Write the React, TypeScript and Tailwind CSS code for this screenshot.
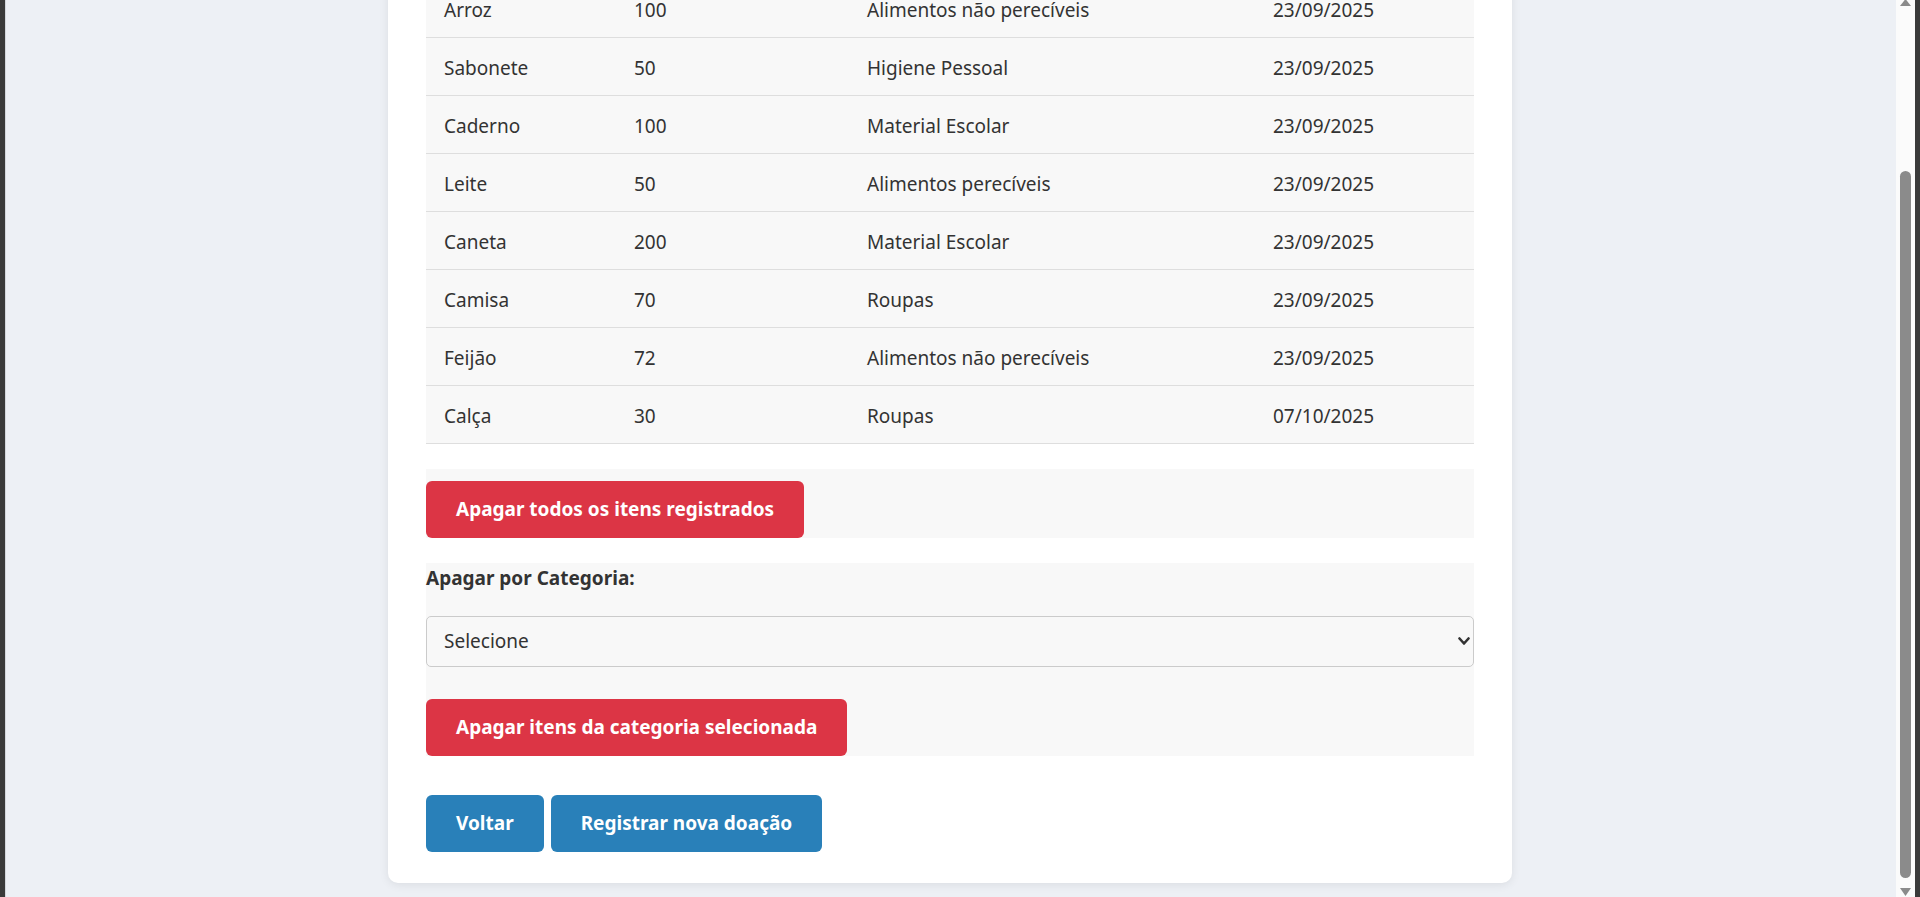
const items = [
    { nome: "Arroz", qtd: 100, categoria: "Alimentos não perecíveis", data: "23/09/2025" },
    { nome: "Sabonete", qtd: 50, categoria: "Higiene Pessoal", data: "23/09/2025" },
    { nome: "Caderno", qtd: 100, categoria: "Material Escolar", data: "23/09/2025" },
    { nome: "Leite", qtd: 50, categoria: "Alimentos perecíveis", data: "23/09/2025" },
    { nome: "Caneta", qtd: 200, categoria: "Material Escolar", data: "23/09/2025" },
    { nome: "Camisa", qtd: 70, categoria: "Roupas", data: "23/09/2025" },
    { nome: "Feijão", qtd: 72, categoria: "Alimentos não perecíveis", data: "23/09/2025" },
    { nome: "Calça", qtd: 30, categoria: "Roupas", data: "07/10/2025" },
];

function Scrollbar() {
    return (
        <div className="w-[19px] bg-[#fbfbfb] flex flex-col items-center">
            <svg width="19" height="6" viewBox="0 0 19 6">
                <polygon points="4,6 15,6 9.5,-1" fill="#8b8b8b" />
            </svg>
            <div className="mt-[165px] h-[707px] w-[11px] rounded-full bg-[#8b8b8b]" />
            <svg className="mt-[10px]" width="19" height="9" viewBox="0 0 19 9">
                <polygon points="4,0 15,0 9.5,8" fill="#8b8b8b" />
            </svg>
        </div>
    );
}

export default function App() {
    return (
        <div className="flex h-[897px] w-full overflow-hidden bg-[#edf0f5] text-[#333] font-['Noto_Sans',sans-serif]">
            <div className="w-[5px] bg-[#3a3a3a]" />

            <main className="flex-1 flex justify-center pr-[2px] border-l border-[#d4d7dc]">
                <div className="w-[1124px] self-start -mt-[21px] bg-white rounded-[10px] shadow-[0_2px_10px_rgba(0,0,0,0.08)] px-[38px] pb-[31px]">

                    <table className="w-full text-[19px] border-collapse">
                        <tbody>
                            {items.map((item) => (
                                <tr key={item.nome} className="h-[58px] bg-[#f8f8f8] border-b border-[#dedede]">
                                    <td className="w-[190px] px-[18px] pt-[5px]">{item.nome}</td>
                                    <td className="w-[233px] px-[18px] pt-[5px]">{item.qtd}</td>
                                    <td className="w-[406px] px-[18px] pt-[5px]">{item.categoria}</td>
                                    <td className="px-[18px] pt-[5px]">{item.data}</td>
                                </tr>
                            ))}
                        </tbody>
                    </table>

                    <div className="mt-[25px] pt-[12px] bg-[#f8f8f8]">
                        <button className="h-[57px] px-[30px] rounded-[6px] bg-[#dc3545] text-white text-[19px] font-bold">
                            Apagar todos os itens registrados
                        </button>
                    </div>

                    <div className="mt-[25px] bg-[#f8f8f8]">
                        <label className="block h-[30px] leading-[30px] text-[19px] font-bold">
                            Apagar por Categoria:
                        </label>
                        <div className="relative mt-[23px]">
                            <select className="appearance-none w-full h-[51px] pl-[17px] rounded-[5px] border border-[#cbcbcb] bg-[#f8f8f8] text-[19px] outline-none">
                                <option>Selecione</option>
                            </select>
                            <svg className="absolute right-[4px] top-[21px] pointer-events-none" width="12" height="9" viewBox="0 0 12 9">
                                <polyline points="1.5,1.5 6,6.5 10.5,1.5" fill="none" stroke="#333" strokeWidth="2.6" strokeLinecap="round" strokeLinejoin="round" />
                            </svg>
                        </div>
                        <button className="mt-[32px] h-[57px] px-[30px] rounded-[6px] bg-[#dc3545] text-white text-[19px] font-bold">
                            Apagar itens da categoria selecionada
                        </button>
                    </div>

                    <div className="mt-[39px] flex gap-[7px]">
                        <button className="h-[57px] px-[30px] rounded-[6px] bg-[#2980b9] text-white text-[19px] font-bold">
                            Voltar
                        </button>
                        <button className="h-[57px] px-[30px] rounded-[6px] bg-[#2980b9] text-white text-[19px] font-bold">
                            Registrar nova doação
                        </button>
                    </div>

                </div>
            </main>

            <Scrollbar />
            <div className="w-[5px] bg-[#3a3a3a]" />
        </div>
    );
}
